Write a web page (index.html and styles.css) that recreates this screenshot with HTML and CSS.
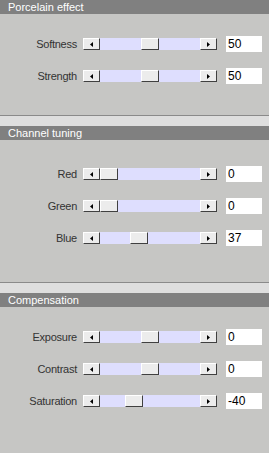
FILE: index.html
```html
<!DOCTYPE html>
<html lang="en">
<head>
  <meta charset="UTF-8">
  <title>Porcelain effect</title>
  <link rel="stylesheet" href="styles.css">
</head>
<body>
  <div class="panel">
    <section class="group first">
      <h2 class="title">Porcelain effect</h2>
      <div class="rows">
        <div class="row">
          <label>Softness</label>
          <div class="slider">
            <span class="btn"><svg width="3" height="5"><polygon points="3,0 3,5 0,2.5" fill="#000"/></svg></span>
            <span class="track"><span class="thumb" style="left:41px"></span></span>
            <span class="btn"><svg width="3" height="5"><polygon points="0,0 0,5 3,2.5" fill="#000"/></svg></span>
          </div>
          <input class="value" type="text" value="50">
        </div>
        <div class="row">
          <label>Strength</label>
          <div class="slider">
            <span class="btn"><svg width="3" height="5"><polygon points="3,0 3,5 0,2.5" fill="#000"/></svg></span>
            <span class="track"><span class="thumb" style="left:41px"></span></span>
            <span class="btn"><svg width="3" height="5"><polygon points="0,0 0,5 3,2.5" fill="#000"/></svg></span>
          </div>
          <input class="value" type="text" value="50">
        </div>
      </div>
    </section>

    <section class="group">
      <h2 class="title">Channel tuning</h2>
      <div class="rows">
        <div class="row">
          <label>Red</label>
          <div class="slider">
            <span class="btn"><svg width="3" height="5"><polygon points="3,0 3,5 0,2.5" fill="#000"/></svg></span>
            <span class="track"><span class="thumb" style="left:0px"></span></span>
            <span class="btn"><svg width="3" height="5"><polygon points="0,0 0,5 3,2.5" fill="#000"/></svg></span>
          </div>
          <input class="value" type="text" value="0">
        </div>
        <div class="row">
          <label>Green</label>
          <div class="slider">
            <span class="btn"><svg width="3" height="5"><polygon points="3,0 3,5 0,2.5" fill="#000"/></svg></span>
            <span class="track"><span class="thumb" style="left:0px"></span></span>
            <span class="btn"><svg width="3" height="5"><polygon points="0,0 0,5 3,2.5" fill="#000"/></svg></span>
          </div>
          <input class="value" type="text" value="0">
        </div>
        <div class="row">
          <label>Blue</label>
          <div class="slider">
            <span class="btn"><svg width="3" height="5"><polygon points="3,0 3,5 0,2.5" fill="#000"/></svg></span>
            <span class="track"><span class="thumb" style="left:30px"></span></span>
            <span class="btn"><svg width="3" height="5"><polygon points="0,0 0,5 3,2.5" fill="#000"/></svg></span>
          </div>
          <input class="value" type="text" value="37">
        </div>
      </div>
    </section>

    <section class="group last">
      <h2 class="title">Compensation</h2>
      <div class="rows">
        <div class="row">
          <label>Exposure</label>
          <div class="slider">
            <span class="btn"><svg width="3" height="5"><polygon points="3,0 3,5 0,2.5" fill="#000"/></svg></span>
            <span class="track"><span class="thumb" style="left:41px"></span></span>
            <span class="btn"><svg width="3" height="5"><polygon points="0,0 0,5 3,2.5" fill="#000"/></svg></span>
          </div>
          <input class="value" type="text" value="0">
        </div>
        <div class="row">
          <label>Contrast</label>
          <div class="slider">
            <span class="btn"><svg width="3" height="5"><polygon points="3,0 3,5 0,2.5" fill="#000"/></svg></span>
            <span class="track"><span class="thumb" style="left:41px"></span></span>
            <span class="btn"><svg width="3" height="5"><polygon points="0,0 0,5 3,2.5" fill="#000"/></svg></span>
          </div>
          <input class="value" type="text" value="0">
        </div>
        <div class="row">
          <label>Saturation</label>
          <div class="slider">
            <span class="btn"><svg width="3" height="5"><polygon points="3,0 3,5 0,2.5" fill="#000"/></svg></span>
            <span class="track"><span class="thumb" style="left:25px"></span></span>
            <span class="btn"><svg width="3" height="5"><polygon points="0,0 0,5 3,2.5" fill="#000"/></svg></span>
          </div>
          <input class="value" type="text" value="-40">
        </div>
      </div>
    </section>
  </div>
</body>
</html>
```

FILE: styles.css
```css
* { margin: 0; padding: 0; box-sizing: border-box; }
html, body { height: 100%; }
body { background: #c6c6c4; font-family: 'Liberation Sans', Arial, sans-serif; }
.panel { width: 269px; }

.group { border-top: 1px solid #8a8a8a; padding-top: 10px; background: linear-gradient(#dedede 0 10px, transparent 10px); }
.group.first { border-top: none; padding-top: 0; background: none; }
.title { height: 14px; line-height: 14px; background: #808080; color: #fff; font-size: 11px; font-weight: 400; padding-left: 8px; }

.rows { display: flex; flex-direction: column; gap: 16px; padding-top: 26px; padding-bottom: 36px; }
.first .rows { padding-top: 22px; padding-bottom: 31px; }
.last .rows { padding-top: 22px; }

.row { display: flex; align-items: center; height: 16px; }
.row label { width: 77px; text-align: right; font-size: 11px; letter-spacing: -0.25px; color: #333; margin-right: 6px; }

.slider { display: flex; width: 134px; height: 12px; }
.btn { width: 17px; height: 12px; background: #ececec; border-top: 1px solid #fff; border-left: 1px solid #fff; border-right: 1px solid #404040; border-bottom: 1px solid #404040; display: flex; align-items: center; justify-content: center; }
.btn svg { display: block; }
.track { position: relative; flex: 1; background: #dedefe; }
.thumb { position: absolute; top: 0; width: 18px; height: 12px; background: #ececec; border-top: 1px solid #fff; border-left: 1px solid #fff; border-right: 1px solid #404040; border-bottom: 1px solid #404040; }

.value { width: 36px; height: 16px; margin-left: 9px; border: none; outline: none; background: #fff; font-family: 'Liberation Sans', Arial, sans-serif; font-size: 12px; color: #000; padding-left: 2px; }
```
